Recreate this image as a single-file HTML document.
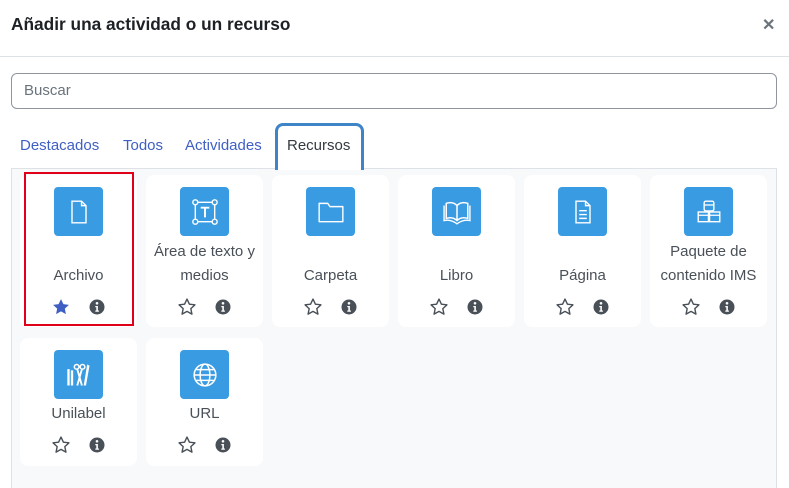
<!DOCTYPE html>
<html><head><meta charset="utf-8"><style>
*{box-sizing:border-box;margin:0;padding:0}
body{width:789px;height:481px;background:#fff;font-family:"Liberation Sans",sans-serif;position:relative;overflow:hidden;color:#495057}
.abs{position:absolute}
.title{left:11px;top:14px;font-size:17.3px;font-weight:bold;color:#1d2125}
.x{left:762px;top:15px;font-size:16px;color:#6a737b;font-weight:bold}
.hr{left:0;top:56px;width:789px;height:1px;background:#dee2e6}
.search{left:11px;top:73px;width:766px;height:36px;border:1px solid #8f959e;border-radius:6px;font-size:15px;color:#6a737b;padding:8px 12px}
.tab{top:137px;font-size:15px;color:#3f5fc4}
.tabact{left:275px;top:123px;width:89px;height:47px;border:3px solid #3d85c6;border-bottom:none;border-radius:8px 8px 0 0;background:#fff;color:#343a40;font-size:15px;padding:11px 0 0 9px}
.content{left:11px;top:168px;width:766px;height:320px;background:#f8f9fa;border-left:1px solid #dee2e6;border-right:1px solid #dee2e6;border-top:1px solid #dee2e6}
.card{position:absolute;width:117px;background:#fff;border-radius:8px}
.ic{position:absolute;left:34px;top:12px;width:49px;height:49px;background:#399be2;border-radius:4px;display:flex;align-items:center;justify-content:center}
.ic svg{flex:none}
.lbl{position:absolute;left:0;width:117px;text-align:center;font-size:15px;line-height:24px;color:#495057}
.st{position:absolute;left:31px;width:20px;height:20px}
.in{position:absolute;left:69px;width:16px;height:16px}
</style></head><body>
<div class="abs title">Añadir una actividad o un recurso</div>
<div class="abs x">✕</div>
<div class="abs hr"></div>
<div class="abs search">Buscar</div>
<div class="abs tab" style="left:20px">Destacados</div>
<div class="abs tab" style="left:123px">Todos</div>
<div class="abs tab" style="left:185px">Actividades</div>
<div class="abs content"></div>
<div class="abs tabact">Recursos</div>

<svg width="0" height="0" style="position:absolute"><defs>
<symbol id="star" viewBox="0 0 24 24"><path d="M12 2.5l2.9 6.1 6.6.8-4.9 4.6 1.3 6.6L12 17.3l-5.9 3.3 1.3-6.6-4.9-4.6 6.6-.8z" fill="none" stroke="#495057" stroke-width="1.7" stroke-linejoin="round"/></symbol>
<symbol id="starf" viewBox="0 0 24 24"><path d="M12 2.5l2.9 6.1 6.6.8-4.9 4.6 1.3 6.6L12 17.3l-5.9 3.3 1.3-6.6-4.9-4.6 6.6-.8z" fill="#3f5fc4"/></symbol>
<symbol id="info" viewBox="0 0 16 16"><circle cx="8" cy="8" r="7.5" fill="#495057"/><circle cx="8" cy="4.3" r="1.3" fill="#fff"/><path d="M6.3 7h2.6v4.5h1v1.3H6.3v-1.3h1V8.3h-1z" fill="#fff"/></symbol>
</defs></svg>

<!-- Row 1 -->
<div class="card" style="left:20px;top:175px;height:152px">
 <div class="ic"><svg width="26" height="28" viewBox="0 0 20 22"><path d="M4.5 2.5h7.5l3.5 3.5v13.5h-11z M12 2.5v3.5h3.5" fill="none" stroke="#fff" stroke-width="1.1"/></svg></div>
 <div class="lbl" style="bottom:39px">Archivo</div>
 <svg class="st" style="bottom:10px"><use href="#starf"/></svg>
 <svg class="in" style="bottom:12px"><use href="#info"/></svg>
</div>
<div class="abs" style="left:24px;top:172px;width:110px;height:154px;border:2px solid #e0001a"></div>

<div class="card" style="left:146px;top:175px;height:152px">
 <div class="ic"><svg width="28" height="28" viewBox="0 0 26 26"><rect x="4" y="4" width="18" height="18" fill="none" stroke="#fff" stroke-width="1.3"/><circle cx="4" cy="4" r="2.3" fill="#399be2" stroke="#fff" stroke-width="1.3"/><circle cx="22" cy="4" r="2.3" fill="#399be2" stroke="#fff" stroke-width="1.3"/><circle cx="4" cy="22" r="2.3" fill="#399be2" stroke="#fff" stroke-width="1.3"/><circle cx="22" cy="22" r="2.3" fill="#399be2" stroke="#fff" stroke-width="1.3"/><path d="M9 9h8M13 9v9" stroke="#fff" stroke-width="1.8"/></svg></div>
 <div class="lbl" style="bottom:39px">Área de texto y medios</div>
 <svg class="st" style="bottom:10px"><use href="#star"/></svg>
 <svg class="in" style="bottom:12px"><use href="#info"/></svg>
</div>

<div class="card" style="left:272px;top:175px;height:152px">
 <div class="ic"><svg width="28" height="24" viewBox="0 0 26 22"><path d="M2 3h8l2 3h12v14H2z" fill="none" stroke="#fff" stroke-width="1.3" stroke-linejoin="round"/></svg></div>
 <div class="lbl" style="bottom:39px">Carpeta</div>
 <svg class="st" style="bottom:10px"><use href="#star"/></svg>
 <svg class="in" style="bottom:12px"><use href="#info"/></svg>
</div>

<div class="card" style="left:398px;top:175px;height:152px">
 <div class="ic"><svg width="28" height="26" viewBox="0 0 26 24"><path d="M13 6C10 3 6 3 3 4v14c3-1 7-1 10 2c3-3 7-3 10-2V4c-3-1-7-1-10 2zM13 6v14" fill="none" stroke="#fff" stroke-width="1.4" stroke-linejoin="round"/><path d="M1 6v14c4-1 8 0 12 3c4-3 8-4 12-3V6" fill="none" stroke="#fff" stroke-width="1.3"/></svg></div>
 <div class="lbl" style="bottom:39px">Libro</div>
 <svg class="st" style="bottom:10px"><use href="#star"/></svg>
 <svg class="in" style="bottom:12px"><use href="#info"/></svg>
</div>

<div class="card" style="left:524px;top:175px;height:152px">
 <div class="ic"><svg width="26" height="28" viewBox="0 0 20 22"><path d="M4.5 2.5h7.5l3.5 3.5v13.5h-11z M12 2.5v3.5h3.5" fill="none" stroke="#fff" stroke-width="1.1"/><path d="M7 10h6M7 13h6M7 16h6" stroke="#fff" stroke-width="1.1"/></svg></div>
 <div class="lbl" style="bottom:39px">Página</div>
 <svg class="st" style="bottom:10px"><use href="#star"/></svg>
 <svg class="in" style="bottom:12px"><use href="#info"/></svg>
</div>

<div class="card" style="left:650px;top:175px;height:152px">
 <div class="ic"><svg width="28" height="28" viewBox="0 0 26 26"><rect x="8.5" y="3" width="9" height="9" rx="1.5" fill="none" stroke="#fff" stroke-width="1.3"/><path d="M8.5 6.5h9" stroke="#fff" stroke-width="1.2"/><rect x="3" y="13" width="9.5" height="9" fill="none" stroke="#fff" stroke-width="1.3"/><rect x="13.5" y="13" width="9.5" height="9" fill="none" stroke="#fff" stroke-width="1.3"/><path d="M3 16h9.5M13.5 16h9.5" stroke="#fff" stroke-width="1.1"/></svg></div>
 <div class="lbl" style="bottom:39px">Paquete de contenido IMS</div>
 <svg class="st" style="bottom:10px"><use href="#star"/></svg>
 <svg class="in" style="bottom:12px"><use href="#info"/></svg>
</div>

<!-- Row 2 -->
<div class="card" style="left:20px;top:338px;height:128px">
 <div class="ic"><svg width="28" height="28" viewBox="0 0 24 24"><path d="M3 7v14M6 8v13" stroke="#fff" stroke-width="2"/><circle cx="10" cy="5" r="2" fill="none" stroke="#fff" stroke-width="1.3"/><circle cx="15" cy="5" r="2" fill="none" stroke="#fff" stroke-width="1.3"/><path d="M10.5 7l4 14M14.5 7l-4 14" stroke="#fff" stroke-width="1.6"/><path d="M19 3l2 1-3 17h-2z" fill="#fff"/></svg></div>
 <div class="lbl" style="bottom:40px">Unilabel</div>
 <svg class="st" style="bottom:11px"><use href="#star"/></svg>
 <svg class="in" style="bottom:13px"><use href="#info"/></svg>
</div>

<div class="card" style="left:146px;top:338px;height:128px">
 <div class="ic"><svg width="26" height="26" viewBox="0 0 24 24" fill="none" stroke="#fff" stroke-width="1.4"><circle cx="12" cy="12" r="10"/><ellipse cx="12" cy="12" rx="4.5" ry="10"/><path d="M2 12h20M4 7h16M4 17h16"/></svg></div>
 <div class="lbl" style="bottom:40px">URL</div>
 <svg class="st" style="bottom:11px"><use href="#star"/></svg>
 <svg class="in" style="bottom:13px"><use href="#info"/></svg>
</div>
</body></html>
